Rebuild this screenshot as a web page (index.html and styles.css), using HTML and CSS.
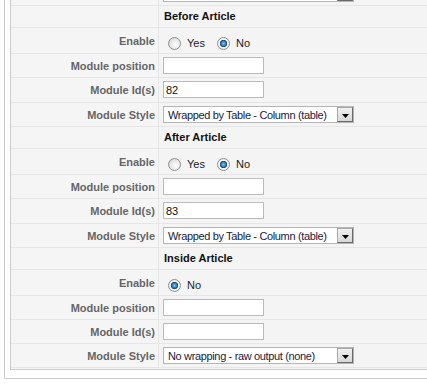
FILE: index.html
```html
<!DOCTYPE html>
<html lang="en">
<head>
    <meta charset="UTF-8">
    <title>Module Parameters</title>
    <link rel="stylesheet" href="styles.css">
</head>
<body>
    <div class="fieldset">
        <div class="panel">
            <table class="paramlist">
                <tr>
                    <td class="key"></td>
                    <td class="value">
                        <div class="select"><span class="select-text"></span><span class="select-btn"><svg width="7" height="4" viewBox="0 0 7 4"><polygon points="0,0 7,0 3.5,4" fill="#000"/></svg></span></div>
                    </td>
                </tr>

                <tr class="head-row">
                    <td class="key"></td>
                    <td class="value"><span class="section">Before Article</span></td>
                </tr>
                <tr class="radio-row">
                    <td class="key">Enable</td>
                    <td class="value">
                        <div class="radios">
                            <input type="radio" name="before">
                            <label>Yes</label>
                            <input type="radio" name="before" checked>
                            <label>No</label>
                        </div>
                    </td>
                </tr>
                <tr>
                    <td class="key">Module position</td>
                    <td class="value"><input type="text" class="text-area" value=""></td>
                </tr>
                <tr class="ids-row">
                    <td class="key">Module Id(s)</td>
                    <td class="value"><input type="text" class="text-area" value="82"></td>
                </tr>
                <tr>
                    <td class="key">Module Style</td>
                    <td class="value">
                        <div class="select"><span class="select-text">Wrapped by Table - Column (table)</span><span class="select-btn"><svg width="7" height="4" viewBox="0 0 7 4"><polygon points="0,0 7,0 3.5,4" fill="#000"/></svg></span></div>
                    </td>
                </tr>

                <tr class="head-row">
                    <td class="key"></td>
                    <td class="value"><span class="section">After Article</span></td>
                </tr>
                <tr class="radio-row">
                    <td class="key">Enable</td>
                    <td class="value">
                        <div class="radios">
                            <input type="radio" name="after">
                            <label>Yes</label>
                            <input type="radio" name="after" checked>
                            <label>No</label>
                        </div>
                    </td>
                </tr>
                <tr>
                    <td class="key">Module position</td>
                    <td class="value"><input type="text" class="text-area" value=""></td>
                </tr>
                <tr class="ids-row">
                    <td class="key">Module Id(s)</td>
                    <td class="value"><input type="text" class="text-area" value="83"></td>
                </tr>
                <tr>
                    <td class="key">Module Style</td>
                    <td class="value">
                        <div class="select"><span class="select-text">Wrapped by Table - Column (table)</span><span class="select-btn"><svg width="7" height="4" viewBox="0 0 7 4"><polygon points="0,0 7,0 3.5,4" fill="#000"/></svg></span></div>
                    </td>
                </tr>

                <tr class="head-row">
                    <td class="key"></td>
                    <td class="value"><span class="section">Inside Article</span></td>
                </tr>
                <tr class="radio-row">
                    <td class="key">Enable</td>
                    <td class="value">
                        <div class="radios">
                            <input type="radio" name="inside" checked>
                            <label>No</label>
                        </div>
                    </td>
                </tr>
                <tr>
                    <td class="key">Module position</td>
                    <td class="value"><input type="text" class="text-area" value=""></td>
                </tr>
                <tr>
                    <td class="key">Module Id(s)</td>
                    <td class="value"><input type="text" class="text-area" value=""></td>
                </tr>
                <tr>
                    <td class="key">Module Style</td>
                    <td class="value">
                        <div class="select"><span class="select-text">No wrapping - raw output (none)</span><span class="select-btn"><svg width="7" height="4" viewBox="0 0 7 4"><polygon points="0,0 7,0 3.5,4" fill="#000"/></svg></span></div>
                    </td>
                </tr>
            </table>
        </div>
    </div>
</body>
</html>
```

FILE: styles.css
```css
html, body {
    overflow: hidden;
}

body {
    margin: 0;
    background: #fff;
    font-family: "Liberation Sans", Arial, Helvetica, sans-serif;
    font-size: 11px;
    color: #222;
}

.fieldset {
    width: 600px;
    margin: -20px 0 0 4px;
    padding: 0 0 8px 5px;
    border: 1px solid #ccc;
}

.panel {
    border: 1px solid #ccc;
    background: #f4f4f4;
    padding-bottom: 1px;
}

.paramlist {
    width: 100%;
    border-collapse: separate;
    border-spacing: 0;
}

.paramlist td {
    padding: 3px 4px;
    border-bottom: 1px solid #e6e6e6;
    vertical-align: middle;
    height: 17px;
}

.paramlist td.key {
    width: 140px;
    padding: 3px 3px 3px 4px;
    text-align: right;
    font-weight: bold;
    color: #666;
    background: #f5f5f5;
    border-right: 1px solid #e6e6e6;
    white-space: nowrap;
}

.head-row td {
    height: 15px;
}

.ids-row td.value {
    padding-bottom: 4px;
}

.section {
    display: block;
    line-height: 15px;
    font-weight: bold;
    color: #111;
    padding-left: 1px;
}

.radios {
    display: flex;
    align-items: center;
    height: 19px;
    padding-top: 6px;
    box-sizing: border-box;
}

.radios label {
    color: #222;
    margin-right: 7px;
    line-height: 13px;
}

.radios input {
    appearance: none;
    -webkit-appearance: none;
    width: 13px;
    height: 13px;
    margin: 0 6px 0 5px;
    border: 1px solid #8e8f8f;
    border-radius: 50%;
    box-sizing: border-box;
    background: radial-gradient(circle at 60% 60%, #fff 0%, #e6e6e6 55%, #c8c8c8 100%);
}

.radios input:checked {
    background: radial-gradient(circle at 50% 50%, #7cc8f4 0%, #2a7cc0 30%, #173f70 44%, #fdfdfd 50%, #e2e2e2 80%, #c8c8c8 100%);
}

.text-area {
    display: block;
    width: 101px;
    height: 17px;
    box-sizing: border-box;
    margin: 0;
    padding: 0 2px;
    border: 1px solid #bbb;
    background: #fff;
    font-family: "Liberation Sans", Arial, Helvetica, sans-serif;
    font-size: 11px;
    color: #111;
}

.select {
    display: flex;
    align-items: center;
    width: 191px;
    height: 17px;
    box-sizing: border-box;
    border: 1px solid #b5b5b5;
    background: #fff;
}

.select-text {
    flex: 1;
    padding-left: 4px;
    color: #1a1a3a;
    letter-spacing: -0.35px;
    white-space: nowrap;
    overflow: hidden;
}

.select-btn {
    display: flex;
    align-items: flex-end;
    justify-content: center;
    width: 16px;
    height: 15px;
    box-sizing: border-box;
    padding-bottom: 3px;
    border: 1px solid #6a6a6a;
    border-top-color: #aaa;
    border-left-color: #aaa;
    background: linear-gradient(#f0f0f0, #d8d8d8);
}
```
